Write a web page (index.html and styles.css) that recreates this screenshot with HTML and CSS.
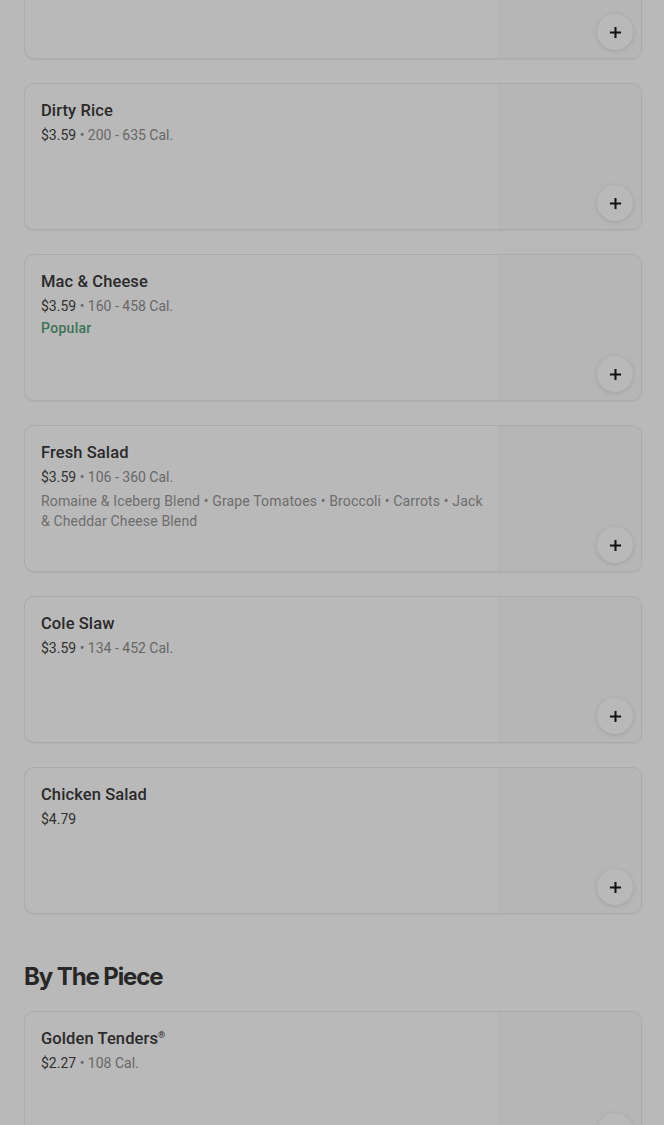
FILE: index.html
```html
<!DOCTYPE html>
<html lang="en">
<head>
  <meta charset="utf-8">
  <title>Menu</title>
  <link rel="stylesheet" href="styles.css">
</head>
<body>
  <div id="menu">

    <!-- Sides -->
    <div class="item-list scrolled">
      <div class="item">
        <div class="item-info">
          <div class="item-name">Red Beans &amp; Rice</div>
          <div class="item-meta"><span class="price">$3.59</span> • 180 - 540 Cal.</div>
        </div>
        <div class="item-photo"><button class="add-btn"><svg viewBox="0 0 14 14"><path d="M7 1v12M1 7h12"/></svg></button></div>
      </div>

      <div class="item">
        <div class="item-info">
          <div class="item-name">Dirty Rice</div>
          <div class="item-meta"><span class="price">$3.59</span> • 200 - 635 Cal.</div>
        </div>
        <div class="item-photo"><button class="add-btn"><svg viewBox="0 0 14 14"><path d="M7 1v12M1 7h12"/></svg></button></div>
      </div>

      <div class="item">
        <div class="item-info">
          <div class="item-name">Mac &amp; Cheese</div>
          <div class="item-meta"><span class="price">$3.59</span> • 160 - 458 Cal.</div>
          <div class="item-tag">Popular</div>
        </div>
        <div class="item-photo"><button class="add-btn"><svg viewBox="0 0 14 14"><path d="M7 1v12M1 7h12"/></svg></button></div>
      </div>

      <div class="item">
        <div class="item-info">
          <div class="item-name">Fresh Salad</div>
          <div class="item-meta"><span class="price">$3.59</span> • 106 - 360 Cal.</div>
          <div class="item-desc">Romaine &amp; Iceberg Blend • Grape Tomatoes • Broccoli • Carrots • Jack &amp; Cheddar Cheese Blend</div>
        </div>
        <div class="item-photo"><button class="add-btn"><svg viewBox="0 0 14 14"><path d="M7 1v12M1 7h12"/></svg></button></div>
      </div>

      <div class="item">
        <div class="item-info">
          <div class="item-name">Cole Slaw</div>
          <div class="item-meta"><span class="price">$3.59</span> • 134 - 452 Cal.</div>
        </div>
        <div class="item-photo"><button class="add-btn"><svg viewBox="0 0 14 14"><path d="M7 1v12M1 7h12"/></svg></button></div>
      </div>

      <div class="item">
        <div class="item-info">
          <div class="item-name">Chicken Salad</div>
          <div class="item-meta"><span class="price">$4.79</span></div>
        </div>
        <div class="item-photo"><button class="add-btn"><svg viewBox="0 0 14 14"><path d="M7 1v12M1 7h12"/></svg></button></div>
      </div>
    </div>

    <!-- By The Piece -->
    <h2 class="section-title">By The Piece</h2>
    <div class="item-list">
      <div class="item">
        <div class="item-info">
          <div class="item-name">Golden Tenders<sup>®</sup></div>
          <div class="item-meta"><span class="price">$2.27</span> • 108 Cal.</div>
        </div>
        <div class="item-photo"><button class="add-btn"><svg viewBox="0 0 14 14"><path d="M7 1v12M1 7h12"/></svg></button></div>
      </div>
    </div>
  </div>

  <!-- modal backdrop -->
  <div class="backdrop"></div>
</body>
</html>
```

FILE: styles.css
```css
body {
  margin: 0;
  font-family: Roboto, "Noto Sans", sans-serif;
  background: #fff;
  color: #000;
  overflow: hidden;
}
#menu {
  padding: 0 22px 0 24px;
}
.item-list {
  display: flex;
  flex-direction: column;
  gap: 24px;
}
.scrolled {
  margin-top: -88px;
}
.item {
  display: flex;
  height: 145px;
  border: 1px solid #ebebeb;
  border-radius: 10px;
  box-shadow: 0 1px 2px rgba(0, 0, 0, 0.05);
  overflow: hidden;
}
.item-info {
  flex: 1;
  padding: 17px 14px 16px 16px;
}
.item-name {
  font-size: 16.5px;
  line-height: 20px;
  font-weight: 500;
  letter-spacing: 0.1px;
  color: #3a3a3a;
}
.item-name sup {
  font-size: 9px;
  line-height: 0;
}
.item-meta {
  margin-top: 4px;
  font-size: 14px;
  line-height: 20px;
  color: #8f8f8f;
}
.price {
  color: #444;
}
.item-tag {
  margin-top: 2px;
  font-size: 14px;
  line-height: 20px;
  font-weight: 500;
  letter-spacing: 0.3px;
  color: #55a07a;
}
.item-desc {
  margin-top: 4px;
  font-size: 14px;
  line-height: 20px;
  letter-spacing: 0.15px;
  color: #979797;
}
.item-photo {
  width: 142px;
  background: #fbfbfb;
  border-left: 1px solid #f3f3f3;
  display: flex;
  align-items: flex-end;
  justify-content: flex-end;
  padding: 8px;
  box-sizing: border-box;
}
.add-btn {
  width: 36px;
  height: 36px;
  border-radius: 50%;
  border: none;
  background: #fff;
  box-shadow: 0 1px 5px rgba(0, 0, 0, 0.12);
  padding: 0;
  display: flex;
  align-items: center;
  justify-content: center;
}
.add-btn svg {
  width: 13px;
  height: 13px;
  stroke: #1a1a1a;
  stroke-width: 2.2;
  fill: none;
}
.section-title {
  margin: 47px 0 18px;
  font-family: Inter, sans-serif;
  font-size: 24px;
  line-height: 32px;
  font-weight: 700;
  letter-spacing: -1.1px;
  color: #363636;
}
.backdrop {
  position: fixed;
  top: 0;
  left: 0;
  right: 0;
  bottom: 0;
  background: rgba(0, 0, 0, 0.275);
}
```
